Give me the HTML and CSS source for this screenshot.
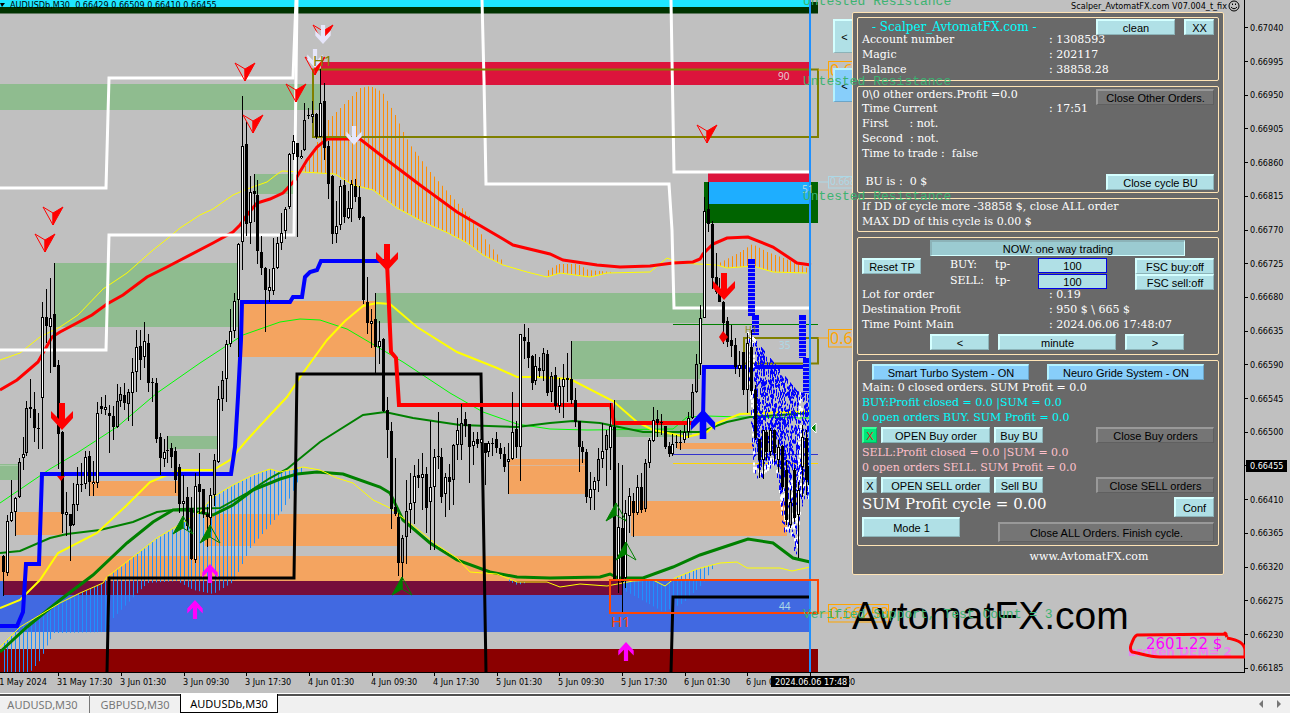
FILE: index.html
```html
<!DOCTYPE html>
<html lang="en">
<head>
    <meta charset="UTF-8">
    <meta name="viewport" content="width=device-width, initial-scale=1.0">
    <title>AUDUSDb,M30</title>
    <link rel="stylesheet" href="styles.css">
</head>
<body>
    <main class="workspace">
        <section class="chart">
            <svg id="chart" class="chart-canvas"></svg>

            <div class="expert-name">
                <span>Scalper_AvtomatFX.com V07.004_t_fix</span>
                <svg width="12" height="12" viewBox="0 0 12 12" fill="none" stroke="#000">
                    <circle cx="6" cy="6" r="5"/>
                    <path d="M3 7 Q6 10.5 9 7"/>
                    <path d="M4.5 3.5v1.5M7.5 3.5v1.5"/>
                </svg>
            </div>

            <aside class="sidebar">
                <button class="btn side-btn side-top">&lt;</button>
                <button class="btn blue side-btn side-bottom">&lt;</button>

                <div class="panel">
                    <div class="group">
                        <div class="row title-row">
                            <h1>- Scalper_AvtomatFX.com -</h1>
                            <button class="btn w-fsc">clean</button>
                            <button class="btn w-xx">XX</button>
                        </div>
                        <div class="line"><span>Account number</span><span>: 1308593</span></div>
                        <div class="line"><span>Magic</span><span>: 202117</span></div>
                        <div class="line"><span>Balance</span><span>: 38858.28</span></div>
                    </div>

                    <div class="group orders">
                        <div class="row first-row">
                            <span>0\0 other orders.Profit =0.0</span>
                            <button class="btn gray w-close push">Close Other Orders.</button>
                        </div>
                        <div class="line"><span>Time Current</span><span>: 17:51</span></div>
                        <div class="line pre">First      : not.</div>
                        <div class="line pre">Second  : not.</div>
                        <div class="line pre">Time to trade :  false</div>
                        <div class="row bu-row">
                            <span class="pre"> BU is :  0 $</span>
                            <button class="btn w-cycle push">Close cycle BU</button>
                        </div>
                    </div>

                    <div class="group drawdown">
                        <div class="line pre">If DD of cycle more -38858 $, close ALL order</div>
                        <div class="line pre">MAX DD of this cycle is 0.00 $</div>
                    </div>

                    <div class="group trading">
                        <button class="btn pressed wide">NOW: one way trading</button>
                        <div class="tp-grid">
                            <button class="btn w-reset">Reset TP</button>
                            <label for="tpBuy">BUY:</label>
                            <label for="tpBuy">tp-</label>
                            <input type="text" id="tpBuy" value="100">
                            <button class="btn w-fsc push">FSC buy:off</button>
                            <span></span>
                            <label for="tpSell">SELL:</label>
                            <label for="tpSell">tp-</label>
                            <input type="text" id="tpSell" value="100">
                            <button class="btn w-fsc push">FSC sell:off</button>
                        </div>
                        <div class="line"><span>Lot for order</span><span>: 0.19</span></div>
                        <div class="line"><span>Destination Profit</span><span>: 950 $ \ 665 $</span></div>
                        <div class="line"><span>Time Point Main</span><span>: 2024.06.06 17:48:07</span></div>
                        <div class="row stepper">
                            <button class="btn w-reset">&lt;</button>
                            <button class="btn w-close">minute</button>
                            <button class="btn w-reset">&gt;</button>
                        </div>
                    </div>

                    <div class="group totals">
                        <div class="row systems">
                            <button class="btn blue">Smart Turbo System - ON</button>
                            <button class="btn blue">Neuro Gride System - ON</button>
                        </div>
                        <div class="line pre">Main: 0 closed orders. SUM Profit = 0.0</div>
                        <div class="line pre buy">BUY:Profit closed = 0.0 |SUM = 0.0</div>
                        <div class="line pre buy">0 open orders BUY. SUM Profit = 0.0</div>
                        <div class="row order-row">
                            <button class="btn green w-x">X</button>
                            <button class="btn w-open">OPEN Buy order</button>
                            <button class="btn w-bu">Buy BU</button>
                            <button class="btn gray w-close push">Close Buy orders</button>
                        </div>
                        <div class="line pre sell">SELL:Profit closed = 0.0 |SUM = 0.0</div>
                        <div class="line pre sell">0 open orders SELL. SUM Profit = 0.0</div>
                        <div class="row order-row">
                            <button class="btn w-x">X</button>
                            <button class="btn w-open">OPEN SELL order</button>
                            <button class="btn w-bu">Sell BU</button>
                            <button class="btn gray w-close push">Close SELL orders</button>
                        </div>
                        <div class="row sum-row">
                            <span class="sum">SUM Profit cycle = 0.00</span>
                            <button class="btn tall w-conf push">Conf</button>
                        </div>
                        <div class="row final-row">
                            <button class="btn tall w-mode">Mode 1</button>
                            <button class="btn gray tall w-all push">Close ALL Orders. Finish cycle.</button>
                        </div>
                    </div>

                    <p class="site">www.AvtomatFX.com</p>
                </div>

                <p class="logo">AvtomatFX.com</p>
            </aside>

            <div class="result">
                <span class="broken">broken DEM= 2</span>
                <span class="amount">2601.22 $</span>
                <svg width="120" height="30" viewBox="0 0 120 30" fill="none" stroke="#f00" stroke-width="3" stroke-linejoin="round">
                    <path d="M99 6 L97 2 L98 3 L9 4 C5 6 5 10 3 14 C2 17 3 20 4 21 C12 22 20 26 32 26 H117 V20 C117 12 110 9 99 7"/>
                </svg>
            </div>

            <svg id="notes" class="chart-canvas notes"></svg>
        </section>

        <ul class="prices">
            <li>0.67040</li>
            <li>0.66995</li>
            <li>0.66950</li>
            <li>0.66905</li>
            <li>0.66860</li>
            <li>0.66815</li>
            <li>0.66770</li>
            <li>0.66725</li>
            <li>0.66680</li>
            <li>0.66635</li>
            <li>0.66590</li>
            <li>0.66545</li>
            <li>0.66500</li>
            <li class="current"><span>0.66455</span></li>
            <li>0.66410</li>
            <li>0.66365</li>
            <li>0.66320</li>
            <li>0.66275</li>
            <li>0.66230</li>
            <li>0.66185</li>
        </ul>
    </main>

    <nav class="tabs">
        <button class="tab">AUDUSD,M30</button>
        <button class="tab">GBPUSD,M30</button>
        <button class="tab active">AUDUSDb,M30</button>
        <div class="scroller">
            <button aria-label="Previous"><svg width="5" height="8"><path d="M4 0v8L0 4z" fill="#777"/></svg></button>
            <button aria-label="Next"><svg width="5" height="8"><path d="M0 0v8l4-4z" fill="#777"/></svg></button>
        </div>
    </nav>

    <script src="chart.js"></script>
</body>
</html>
```

FILE: styles.css
```css
* {
    box-sizing: border-box;
}
body {
    margin: 0;
    height: 100vh;
    display: flex;
    flex-direction: column;
    overflow: hidden;
    background: #c0c0c0;
    color: #000;
    font-family: "DejaVu Sans Condensed", "DejaVu Sans", sans-serif;
    font-size: 9px;
}
h1, p, ul {
    margin: 0;
    padding: 0;
    font-weight: normal;
}
button, input {
    font-family: "Liberation Sans", Arial, sans-serif;
    font-size: 11px;
    color: #000;
    padding: 0;
    margin: 0;
}
.workspace {
    flex: 1;
    display: flex;
    min-height: 0;
}
.chart {
    position: relative;
    flex: 1;
    overflow: hidden;
}
.chart-canvas {
    display: block;
    width: 100%;
    height: 100%;
}
.chart-canvas text {
    white-space: pre;
}
.notes {
    position: absolute;
    inset: 0;
    pointer-events: none;
}
.expert-name {
    position: absolute;
    top: 0;
    right: 5px;
    display: flex;
    align-items: center;
    gap: 1px;
    line-height: 12px;
}

/* price scale */
.prices {
    width: 45px;
    list-style: none;
    display: flex;
    flex-direction: column;
    padding: 11px 0 8px;
}
.prices li {
    flex: 1;
    display: flex;
    align-items: center;
    gap: 2px;
}
.prices li::before {
    content: "";
    width: 3px;
    height: 1px;
    background: #000;
}
.current span {
    background: #000;
    color: #fff;
    line-height: 12px;
    padding: 0 4px;
    margin-left: -4px;
}

/* control panel */
.sidebar {
    position: absolute;
    top: 12px;
    right: 21px;
    width: 372px;
}
.panel {
    position: relative;
    background: #696969;
    border: 1px solid #ffe4b5;
    border-radius: 2px;
    padding: 4px;
    height: 563px;
    display: flex;
    flex-direction: column;
    gap: 5px;
    color: #fff;
    font-family: "DejaVu Serif", serif;
    font-size: 11px;
}
.group {
    border: 1px solid #ffe4b5;
    border-radius: 2px;
    padding: 0 4px;
}
.row {
    display: flex;
    align-items: flex-start;
}
.line, .row span {
    line-height: 15px;
}
.line {
    display: grid;
    grid-template-columns: 187px 1fr;
}
.pre {
    display: block;
    white-space: pre;
}
.push {
    margin-left: auto;
}
h1 {
    flex: 1;
    padding-left: 10px;
    color: #00ffff;
    font-size: 12px;
    line-height: 17px;
}
.title-row {
    height: 14px;
    padding-top: 1px;
    gap: 9px;
}
.group:first-child {
    padding-bottom: 3px;
}
.first-row {
    height: 14px;
}
.first-row .btn {
    margin-top: 2px;
}
.bu-row {
    margin-top: 13px;
    height: 18px;
}
.drawdown {
    padding-bottom: 2px;
}
.trading {
    padding-top: 2px;
    padding-bottom: 4px;
}
.totals {
    padding-top: 3px;
    padding-bottom: 3px;
}
.buy {
    color: #00ffff;
}
.sell {
    color: #ffc0cb;
}

.btn {
    height: 16px;
    line-height: 14px;
    background: #b0e0e6;
    border: 1px solid;
    border-color: #d4ffff #8cb3b8 #8cb3b8 #d4ffff;
    border-width: 2px 1px 1px 2px;
    overflow: hidden;
    white-space: nowrap;
}
.btn.blue {
    background: #87cefa;
    border-color: #b4f2ff #6ca5c8 #6ca5c8 #b4f2ff;
}
.btn.gray {
    background: #757575;
    border-color: #999 #606060 #606060 #999;
}
.btn.green {
    background: #00e67a;
    border-color: #3cff9c #00b862 #00b862 #3cff9c;
    color: #d22;
}
.btn.pressed {
    background: #9bcbd1;
    border-color: #8cb3b8 #d4ffff #d4ffff #8cb3b8;
}
.btn.tall {
    height: 20px;
}
.w-fsc { width: 79px; }
.w-xx { width: 30px; }
.w-close { width: 118px; }
.w-cycle { width: 108px; }
.w-reset { width: 59px; }
.w-x { width: 15px; }
.w-open { width: 109px; }
.w-bu { width: 49px; }
.w-conf { width: 40px; }
.w-mode { width: 98px; }
.w-all { width: 216px; }

.wide {
    display: block;
    width: 255px;
    margin: 0 auto 2px 68px;
}
.tp-grid {
    display: grid;
    grid-template-columns: 88px 45px 43px 69px 1fr;
    grid-auto-rows: 16px;
    line-height: 14px;
    margin-bottom: -3px;
}
.tp-grid input {
    width: 69px;
    height: 15px;
    background: #b0e0e6;
    border: 1px solid #0000e6;
    text-align: center;
}
.stepper {
    margin: 2px 0 0 68px;
    gap: 9px;
}
.systems {
    justify-content: space-between;
    padding: 0 10px;
}
.systems .btn {
    width: 157px;
}
.order-row {
    gap: 4px;
    padding: 2px 0;
}
.sum-row {
    height: 22px;
    padding-top: 2px;
}
.sum-row .sum {
    font-size: 15px;
}
.final-row .w-all {
    margin-top: 5px;
}
.final-row {
    height: 25px;
}
.site {
    text-align: center;
    padding-left: 102px;
    line-height: 12px;
}
.side-btn {
    position: absolute;
    left: -19px;
    width: 22px;
    height: 34px;
}
.side-top {
    top: 7px;
}
.side-bottom {
    top: 56px;
}
.logo {
    font-family: "Liberation Sans", Arial, sans-serif;
    font-size: 39px;
    line-height: 44px;
    margin-top: 19px;
}

/* result with the hand-drawn mark round it */
.result {
    position: absolute;
    right: -3px;
    top: 631px;
    width: 120px;
    height: 30px;
    font-family: "DejaVu Sans", sans-serif;
}
.result svg, .amount, .broken {
    position: absolute;
    left: 0;
    top: 0;
}
.amount {
    left: 18px;
    top: 4px;
    font-size: 15px;
    line-height: 18px;
    color: #f0f;
    white-space: nowrap;
}
.broken {
    top: 14px;
    font-size: 12px;
    line-height: 15px;
    height: 13px;
    overflow: hidden;
    font-weight: bold;
    color: #ee82ee;
    white-space: nowrap;
}

/* chart tabs */
.tabs {
    height: 20px;
    display: flex;
    background: #f0f0f0;
    border-top: 1px solid #fff;
    box-shadow: inset 0 2px #505050, inset 0 3px #fff;
}
.tab {
    border: 0;
    background: none;
    width: 90px;
    padding-top: 2px;
    font-family: "Noto Sans", sans-serif;
    font-size: 11px;
    line-height: 16px;
    color: #777;
    white-space: nowrap;
}
.tab:first-child {
    border-right: 1px solid #777;
    width: 90px;
    padding-right: 4px;
}
.tab.active {
    width: 98px;
    color: #000;
    background: #fff;
    border: 1px solid #000;
    border-top: 0;
}
.scroller {
    margin-left: auto;
    display: flex;
    align-items: center;
    gap: 13px;
    padding-right: 8px;
}
.scroller button {
    border: 0;
    background: none;
    display: flex;
}
```

FILE: chart.js
```js
const NS = 'http://www.w3.org/2000/svg';
const chart = document.getElementById('chart');
const notes = document.getElementById('notes');

const BAR = 3.915;
const FIRST = 3.5;
const barX = i => FIRST + BAR * i;

function add(tag, attrs, parent = chart) {
    const el = document.createElementNS(NS, tag);
    for (const key in attrs) el.setAttribute(key, attrs[key]);
    parent.appendChild(el);
    return el;
}

function rect(x1, y1, x2, y2, fill) {
    add('rect', { x: x1, y: y1, width: x2 - x1, height: y2 - y1, fill });
}

function line(points, stroke, width) {
    add('polyline', { points, stroke, 'stroke-width': width, fill: 'none' });
}

function frame(x1, y1, x2, y2, stroke, width) {
    add('rect', { x: x1, y: y1, width: x2 - x1, height: y2 - y1, stroke, 'stroke-width': width, fill: 'none' });
}

function text(x, y, value, fill, size, family, parent) {
    add('text', { x, y, fill, 'font-size': size, 'font-family': family }, parent).textContent = value;
}

// y of a "x,y x,y" polyline at a given x
function yAt(points, x) {
    const p = points.split(' ').map(s => s.split(',').map(Number));
    for (let i = 1; i < p.length; i++) {
        if (x <= p[i][0]) {
            const [x0, y0] = p[i - 1];
            const [x1, y1] = p[i];
            return y0 + (y1 - y0) * (x - x0) / (x1 - x0);
        }
    }
    return p[p.length - 1][1];
}

// vertical hatching between two polylines, one stroke per bar
function hatch(from, to, upper, lower, color) {
    for (let i = 0; i < 207; i++) {
        const x = Math.round(barX(i));
        if (x < from || x > to) continue;
        rect(x, yAt(upper, x), x + 1, Math.max(yAt(lower, x), yAt(upper, x)), color);
    }
}

// zones
const GREEN = '#8fbc8f';
const SAND = '#f4a460';
const zones = [
    [0, 0, 811, 7, '#1ee6ff'], [0, 7, 818, 13.5, '#003300'], [811, 2, 818, 7, '#003300'],
    [0, 84, 321, 110, GREEN], [255, 174, 295, 194, GREEN], [55, 263, 238, 327, GREEN],
    [168, 436, 218, 449, GREEN], [0, 464, 18, 480, GREEN], [376, 293, 703, 323, GREEN],
    [572, 341, 700, 379, GREEN], [615, 400, 692, 437, GREEN],
    [242, 301, 375, 357, SAND], [90, 481, 178, 496, SAND], [16, 512, 62, 535, SAND],
    [205, 514, 399, 546, SAND], [0, 556, 615, 581, SAND], [509, 459, 587, 494, SAND],
    [631, 501, 787, 536, SAND], [677, 443, 753, 449, SAND],
    [0, 465, 18, 466, '#a9cba9'], [509, 465, 587, 466, '#d8b69a'],
    [0, 581, 810, 595, '#4169e1'], [3, 581, 623, 595, '#760d3b'], [0, 595, 810, 632, '#4169e1'],
    [0, 649, 818, 672, '#8b0000'],
    [321, 62, 810, 85, '#dc143c'], [704, 182, 818, 223, '#006400'],
    [708, 173, 810, 182, '#dc143c'], [708, 182, 810, 204, '#1eaeff']
];
zones.forEach(z => rect(...z));

// indicator curves
const upperBand = '0,360 20,353 40,337 60,327 78,315 103,289 127,273 153,250 167,239 180,228 200,215 213,209 233,195 247,189 267,182 276,175 282,171 303,172 335,174 353,185 373,190 397,208 423,222 448,233 467,243 483,255 503,265 527,272 547,277 560,273 590,277 607,273 650,272 667,258 680,263 717,265 727,268 753,266 773,272 807,273';
const lowerBand = '0,647 20,627 40,615 60,603 80,593 103,583 107,577 133,557 157,538 187,520 200,512 213,497 233,485 253,475 270,469 280,472 303,467 320,470 337,478 353,483 373,500 390,508 410,523 437,545 457,558 470,572 497,574 517,582 547,582 560,587 580,584 607,586 633,581 653,580 665,586 675,578 697,569 720,563 737,562 747,568 780,568 792,571 810,567';

hatch(303, 503, '303,170 328,120 348,100 360,88 370,86 382,92 395,115 403,132 410,145 430,172 450,195 470,217 480,233 503,262', upperBand, '#ff8c00');
hatch(545, 611, '545,272 558,264 577,264 588,270 611,272', upperBand, '#ff8c00');
hatch(719, 807, '719,263 740,252 752,244 767,252 783,258 807,268', upperBand, '#ff8c00');
hatch(0, 302, lowerBand, '0,672 30,672 40,660 53,633 105,632 113,618 147,583 177,581 193,590 213,594 233,582 250,548 280,513 290,497 302,472', '#1e90ff');
hatch(508, 525, lowerBand, '508,581 517,585 525,583', '#1e90ff');
hatch(623, 714, lowerBand, '623,590 647,603 663,612 683,603 703,583 714,566', '#1e90ff');

line('0,503 50,469 77,453 117,427 157,393 200,363 243,335 280,322 300,319 320,320 347,329 403,362 450,393 483,412 517,424 550,429 587,430 673,429 687,417 707,416 740,417 810,418', '#00ff00', 1);
line(upperBand, '#ffff00', 1);
line('0,553 20,551 50,538 67,534 100,530 133,522 157,512 180,509 220,508 247,493 270,478 287,469 320,442 363,415 385,412 413,418 460,425 517,427 550,423 573,421 600,423 643,432 700,432 727,422 750,417 810,413', '#008000', 2);
line('0,652 27,627 60,600 93,575 127,543 153,522 173,510 187,510 213,515 233,505 253,490 280,479 297,474 317,472 343,474 380,487 390,493 403,520 430,543 457,560 490,572 517,577 550,578 600,577 610,574 618,578 643,578 673,567 700,555 727,546 748,539 773,543 793,558 810,562', '#008000', 3);
line(lowerBand, '#ffff00', 1);
line('0,608 20,600 40,580 58,553 97,533 127,505 150,482 167,475 180,470 213,470 230,460 247,440 270,415 287,397 303,373 327,340 345,321 363,306 377,303 390,304 417,327 457,352 497,368 517,377 537,377 570,379 613,401 637,422 653,430 687,437 707,432 717,423 740,414 787,412 810,411', '#ffff00', 2);
line('0,390 17,380 38,362 52,337 60,332 92,315 107,304 123,295 147,277 167,267 213,243 233,232 240,225 247,215 257,203 270,199 283,193 295,180 307,160 317,147 327,139 360,139 387,160 420,185 457,212 503,239 513,245 550,254 563,260 597,265 620,267 650,266 673,263 693,262 700,259 703,254 713,244 727,238 748,237 773,247 797,263 811,265', '#ff0000', 3);

// step lines
line('0,188 106,188 109,78 293,78 296,0', '#fff', 3);
line('0,350 106,350 109,235 294,235 297,0', '#fff', 3);
line('482,0 484,80 486,184 669,184 672,230 674,308 811,308', '#fff', 3);
line('671,0 672,60 674,172 811,172', '#fff', 3);
line('107,672 109,578 294,578 297,374 481,374 486,672', '#000', 3);
line('671,672 673,597 811,597', '#000', 3);
line('0,626 17,626 23,612 26,564 39,564 42,474 231,474 235,447 238,397 241,340 242,302 290,302 293,297 302,297 305,277 310,272 317,270 321,261 387,261', '#0000ff', 4);
line('703,420 704,367 811,367', '#0000ff', 4);
line('387,262 391,352 396,358 399,405 611,405 614,423 692,423', '#ff0000', 4);

// levels
line('673,324.5 818,324.5', '#008000', 1);
line('673,454.5 818,454.5', '#3333cc', 1);
line('673,463.5 818,463.5', '#ffd700', 1);
frame(313, 69.5, 818, 137, '#808000', 2);
frame(744, 338, 818, 363.5, '#808000', 2);

// projection cloud: short strokes between two bounds
let seed = 7;
function rnd() {
    seed = (seed * 16807) % 2147483647;
    return seed / 2147483647;
}
const cloudTop = '747,332 756,341 797,391 809,395';
const cloudBottom = '747,350 750,400 753,470 758,478 765,474 772,462 778,480 782,525 792,538 796,557 800,520 803,497 809,497';
for (let x = 747; x < 809; x += 1) {
    const bottom = yAt(cloudBottom, x);
    for (let y = yAt(cloudTop, x); y < bottom; y += 3 + rnd() * 3) {
        const edge = x < 755 || y > bottom - 10 || (x > 797 && x < 802) || (x > 780 && y > 480);
        const r = rnd();
        if (edge && r < 0.4) {
            rect(x, y, x + 2, y + 3, '#fff');
        } else if (r < 0.68) {
            rect(x, y, x + 1, y + 2 + rnd() * 3, '#0000ff');
        }
    }
}
function ladder(x1, y1, x2, y2) {
    rect(x1, y1, x2, y2, '#0000ff');
    for (let y = y1 + 5; y < y2; y += 4) rect(x1, y, x2, y + 1, '#9c9ce0');
}
ladder(748, 259, 755, 316);
ladder(752, 315, 759, 335);
ladder(799, 315, 806, 358);
ladder(803, 358, 810, 393);

// candles: high, low, body top, body bottom, type (0 hollow, 1 black, 2 gray)
const candles = [
    [555,596,556,572,1],[515,576,521,573,0],[480,522,512,521,0],[497,536,498,512,0],[458,498,462,497,2],
    [437,470,454,458,0],[401,456,408,453,2],[379,418,407,409,1],[392,442,409,428,1],[413,449,428,429,1],
    [302,449,317,398,0],[289,343,317,326,1],[278,373,318,327,0],[263,367,314,367,1],[360,469,365,434,1],
    [431,533,432,514,1],[492,536,512,515,0],[514,561,514,526,1],[483,526,504,525,2],[467,511,484,505,0],
    [463,492,484,485,1],[451,489,457,484,0],[451,496,456,482,1],[461,496,482,484,0],[402,488,413,483,0],
    [397,414,406,409,1],[395,415,407,410,0],[405,453,413,416,1],[406,440,416,427,1],[384,428,401,427,2],
    [387,407,394,401,2],[383,410,395,403,1],[389,421,392,404,2],[358,426,372,393,0],[330,392,347,372,0],
    [330,380,346,360,1],[322,368,341,357,0],[334,392,343,383,1],[378,402,382,383,1],[378,443,383,439,1],
    [433,475,437,458,1],[439,467,452,459,0],[436,463,450,451,1],[443,468,448,457,1],[447,493,451,480,1],
    [464,513,467,504,1],[475,520,501,504,0],[487,530,497,526,1],[497,560,508,559,1],[473,563,486,560,0],
    [453,514,484,492,1],[489,518,489,514,1],[507,547,514,517,1],[488,532,495,518,0],[454,506,460,495,2],
    [386,463,399,462,0],[371,411,380,399,2],[340,402,344,379,0],[309,347,331,344,0],[293,338,301,331,0],
    [243,357,244,300,0],[96,270,146,242,0],[122,236,144,224,1],[176,244,192,223,0],[174,222,191,194,1],
    [180,264,195,251,1],[236,275,252,268,1],[267,332,268,290,1],[269,302,287,291,0],[238,295,268,291,0],
    [237,269,243,268,0],[213,250,233,243,0],[207,239,209,231,0],[153,209,154,207,0],[135,160,141,154,0],
    [143,237,143,157,1],[150,159,156,158,0],[103,151,120,150,2],[108,119,115,116,1],[101,123,114,117,0],
    [113,139,114,137,1],[69,137,103,137,0],[83,160,101,148,1],[141,199,146,184,1],[175,244,176,234,1],
    [201,243,226,234,0],[180,230,186,225,0],[180,223,185,217,1],[191,219,208,218,0],[180,222,184,209,0],
    [179,202,186,197,1],[186,220,197,218,1],[216,304,217,300,1],[277,334,302,323,1],[309,348,321,324,0],
    [293,373,319,347,1],[321,364,341,347,0],[338,412,339,411,1],[397,458,410,430,1],[422,529,431,509,1],
    [458,516,507,514,1],[513,576,517,563,1],[535,580,538,563,2],[480,564,511,537,2],[473,533,503,510,0],
    [465,524,476,503,0],[459,488,475,478,1],[453,510,474,478,0],[467,533,474,508,1],[421,550,487,502,0],
    [449,550,457,487,0],[412,469,456,457,1],[448,503,457,497,1],[473,517,477,494,0],[464,510,477,482,1],
    [444,505,445,480,2],[418,460,430,445,0],[404,460,423,445,2],[412,437,419,426,1],[424,483,424,447,1],
    [432,465,441,446,0],[432,448,439,444,1],[424,450,439,443,0],[443,485,443,453,1],[441,457,443,452,0],
    [438,456,443,444,1],[432,453,439,448,1],[443,459,448,454,1],[447,472,454,467,1],[443,494,459,462,0],
    [392,460,432,459,0],[421,458,429,447,1],[334,481,334,447,0],[324,359,337,341,1],[328,368,342,358,1],
    [355,390,356,383,1],[354,385,366,381,0],[357,377,368,371,1],[348,381,353,371,2],[350,396,354,393,1],
    [372,402,376,392,2],[367,410,375,406,1],[378,413,386,406,0],[364,418,379,387,0],[353,402,378,380,1],
    [341,404,379,400,1],[388,427,400,422,1],[421,472,421,447,1],[441,463,447,452,1],[449,503,452,497,1],
    [472,510,489,498,0],[477,510,481,490,0],[448,492,459,481,2],[423,468,451,459,0],[430,486,435,450,2],
    [403,470,426,448,0],[400,580,427,580,1],[463,593,527,580,0],[465,613,528,582,1],[500,588,513,578,0],
    [488,533,496,516,0],[493,537,501,513,1],[475,515,487,513,0],[473,513,487,510,1],[459,512,463,509,2],
    [438,468,440,463,0],[407,442,420,441,0],[410,437,419,423,1],[414,435,422,423,1],[426,449,426,447,1],
    [442,457,446,454,1],[434,456,444,454,0],[435,448,442,443,1],[430,450,442,443,1],[425,443,432,440,0],
    [412,438,418,432,0],[384,419,392,418,2],[354,393,364,392,2],[305,375,318,364,0],[197,318,211,318,0],
    [182,232,209,224,1],[221,289,224,278,1],[253,294,277,292,1],[278,302,291,302,1],[301,344,302,323,1],
    [317,347,321,342,1],[325,357,340,346,1],[338,374,345,367,1],[351,377,365,369,0],[352,395,352,390,1],
    [333,413,343,390,0],[330,395,347,391,1],[385,440,390,438,1],[439,478,439,460,1],[430,479,430,460,0],
    [430,460,432,452,1],[428,456,430,452,0],[430,462,430,453,1],[440,472,447,460,0],[445,490,446,487,1],
    [460,525,470,520,1],[490,528,502,525,2],[468,522,470,518,1],[482,558,490,515,0],[425,497,437,467,0],
    [430,495,438,480,1],[417,499,466,485,0]
];
candles.forEach(([high, low, top, bottom, type], i) => {
    const x = Math.floor(barX(i));
    rect(x, high, x + 1, low, '#000');
    rect(x - 1, top, x + 2, bottom, '#000');
    if (type !== 1) rect(x, top + 1, x + 1, Math.max(bottom - 1, top + 2), type ? '#999' : '#fff');
});

// arrows
function bigArrow(x, y, color, s, up) {
    const path = 'M-3 0H3V16L11 8V15L0 27L-11 15V8L-3 16Z';
    add('path', { d: path, fill: color, transform: `translate(${x} ${y}) scale(${s} ${up ? -s : s})` });
}
function dart(x, y, color, up) {
    const g = add('g', { transform: `translate(${x} ${y}) scale(1 ${up ? -1 : 1})`, stroke: color });
    add('path', { d: 'M0 9L-10 -9L0 -3Z', fill: up ? color : 'none' }, g);
    add('path', { d: 'M0 9L10 -9L0 -3Z', fill: up ? 'none' : color }, g);
}
[[53, 216], [45, 243], [245, 72], [253, 124], [296, 93], [323, 34], [315, 66], [707, 134]].forEach(p => dart(...p, '#f00'));
[[402, 586], [183, 525], [210, 534], [616, 512], [626, 551]].forEach(p => dart(...p, '#008000', true));
bigArrow(62, 403, '#f00', 1);
bigArrow(387, 244, '#f00', 1);
bigArrow(724, 273, '#f00', 1);
bigArrow(703, 439, '#0000ff', 1.1, true);
[[195, 619], [210, 583], [626, 661]].forEach(([x, y]) => bigArrow(x, y, '#f0f', 0.7, true));
[[323, 25], [315, 49], [354, 126]].forEach(([x, y]) => bigArrow(x, y, '#e6e6fa', 0.7));
add('path', { d: 'M719 337l4-6 5 6-5 6zM57 476h8l-4 5z', fill: '#e00' });

rect(809, 0, 811, 672, '#1e90ff');
frame(610, 580, 818, 613, '#ff4500', 2);
add('path', { d: 'M811 428l5-5v10z', fill: '#008000', stroke: '#fff' });

// labels on the chart
const SANS = '"DejaVu Sans Condensed", "DejaVu Sans", sans-serif';
const SMALL = '"Noto Sans", sans-serif';
text(313, 66, 'H1', '#808000', 15, SMALL);
text(611, 627, 'H1', '#ff4500', 15, SMALL);
text(745, 333, 'H1', '#808000', 9, SMALL);
text(778, 80, '90', '#e6c8d0', 10, SMALL);
text(802, 193, '51', '#add8e6', 10, SMALL);
text(779, 349, '35', '#add8e6', 10, SMALL);
text(779, 610, '44', '#add8e6', 10, SMALL);

function priceTag(y, height, value, color, size, width) {
    line(`818,${y + height / 2} 828,${y + height / 2}`, color, 1);
    frame(828.5, y + 0.5, 828.5 + width, y + height, color, 1);
    text(830, y + height - 3, value, color, size, SMALL);
}
priceTag(61, 18, '0.66980', '#ffa500', 16, 60);
priceTag(176, 12, '0.66832', '#add8e6', 10, 40);
priceTag(329, 18, '0.66625', '#ffa500', 16, 60);
priceTag(604, 18, '0.66258', '#ffa500', 16, 60);

text(10, 8, 'AUDUSDb,M30  0.66429 0.66509 0.66410 0.66455', '#000', 9, SANS);
add('path', { d: 'M0 3h5l-3 4z' });

// time scale
rect(0, 672, 1245, 673, '#000');
rect(1244, 0, 1245, 673, '#000');
const times = ['31 May 2024', '31 May 17:30', '3 Jun 01:30', '3 Jun 09:30', '3 Jun 17:30', '4 Jun 01:30', '4 Jun 09:30',
    '4 Jun 17:30', '5 Jun 01:30', '5 Jun 09:30', '5 Jun 17:30', '6 Jun 01:30', '6 Jun 09:30', '6 Jun 17:30'];
times.forEach((label, n) => {
    const x = Math.round(barX(14 + (n - 1) * 16));
    rect(x, 672, x + 1, 676, '#000');
    text(n ? x - 1 : -6, 685, label, '#000', 9, SANS);
});
rect(771, 676, 849, 687, '#000');
text(775, 685, '2024.06.06 17:48', '#fff', 9, SANS);

// level captions lie over the panel
const MONO = '"Liberation Mono", monospace';
[5, 85, 200].forEach(y => text(803, y, 'Untested Resistance', '#3cb371', 13, MONO, notes));
text(803, 618, 'Verified Support, Test Count = 3', '#3cb371', 13, MONO, notes);
```
